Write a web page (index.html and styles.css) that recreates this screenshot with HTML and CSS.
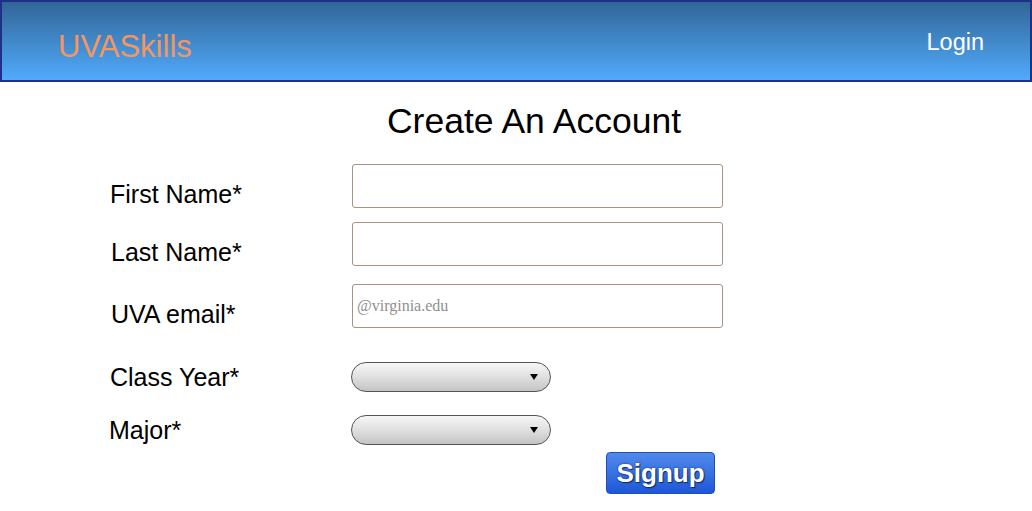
FILE: index.html
```html
<!DOCTYPE html>
<html lang="en">
<head>
<meta charset="utf-8">
<title>UVASkills - Create An Account</title>
<link rel="stylesheet" href="styles.css">
</head>
<body>
<header class="topbar">
  <a class="logo" href="#">UVASkills</a>
  <a class="login" href="#">Login</a>
</header>
<main class="page">
  <h1 class="title">Create An Account</h1>
  <form class="form">
    <div class="row row-first">
      <label class="label label-text" for="fn">First Name*</label>
      <input class="field" id="fn" type="text">
    </div>
    <div class="row row-last">
      <label class="label label-text" for="ln">Last Name*</label>
      <input class="field" id="ln" type="text">
    </div>
    <div class="row row-email">
      <label class="label label-text" for="em">UVA email*</label>
      <input class="field" id="em" type="text" placeholder="@virginia.edu">
    </div>
    <div class="row row-year">
      <label class="label" for="cy">Class Year*</label>
      <div class="select-wrap"><select class="select" id="cy"><option></option></select></div>
    </div>
    <div class="row row-major">
      <label class="label" for="mj">Major*</label>
      <div class="select-wrap"><select class="select" id="mj"><option></option></select></div>
    </div>
    <div class="row row-submit">
      <span></span>
      <button class="signup" type="button">Signup</button>
    </div>
  </form>
</main>
</body>
</html>
```
FILE: styles.css
```css
* { box-sizing: border-box; }
html, body { margin: 0; padding: 0; background: #fff; }
body { font-family: "Liberation Sans", Arial, sans-serif; color: #000; }

.topbar {
  height: 82px;
  border: 2px solid #1f3187;
  background: linear-gradient(to bottom, #326596 0%, #4a9de8 80%, #52a9fb 100%);
  display: flex;
  align-items: center;
  justify-content: space-between;
  padding: 0 46px 0 56px;
}
.logo {
  color: #f5955f;
  font-size: 31px;
  text-decoration: none;
  margin-top: 12px;
}
.login {
  color: #fff;
  font-size: 23.5px;
  text-decoration: none;
  margin-top: 2px;
}

.title {
  margin: 19px 0 0 36px;
  font-size: 35.5px;
  line-height: 41px;
  font-weight: normal;
  text-align: center;
}

.form {
  margin-top: 22px;
  padding-left: 110px;
}
.row {
  display: grid;
  grid-template-columns: 242px 371px;
  align-items: center;
}
.row-last { margin-top: 14px; }
.row-email { margin-top: 18px; }
.row-year { margin-top: 34px; }
.row-major { margin-top: 23px; }
.row-submit { margin-top: 7px; }

.label {
  font-size: 25px;
  line-height: 28px;
}
.label-text { padding-top: 16px; }
.row-last .label, .row-email .label { padding-left: 1px; }
.row-major .label { margin-left: -1px; }

.field {
  width: 371px;
  height: 44px;
  border: 1px solid #a39582;
  border-radius: 3px;
  background: #fff;
  padding: 0 4px;
  font-family: "Liberation Serif", "Times New Roman", serif;
  font-size: 16px;
  outline: none;
}
.field::placeholder { color: #8f8f8f; }

.select-wrap {
  position: relative;
  width: 200px;
  height: 30px;
  margin-left: -1px;
}
.select {
  appearance: none;
  -webkit-appearance: none;
  width: 200px;
  height: 30px;
  border: 1px solid #545454;
  border-radius: 15px;
  background: linear-gradient(to bottom, #f6f6f6 0%, #e2e2e2 45%, #c4c4c4 100%);
  font-family: "Liberation Sans", Arial, sans-serif;
  font-size: 14px;
  display: block;
}
.select-wrap::after {
  content: "";
  position: absolute;
  right: 13px;
  top: 12px;
  border-left: 4.5px solid transparent;
  border-right: 4.5px solid transparent;
  border-top: 6px solid #000;
  pointer-events: none;
}

.signup {
  width: 109px;
  height: 42px;
  margin-left: 254px;
  border: 1px solid #1f4fb4;
  border-radius: 4px;
  background: linear-gradient(to bottom, #5189ea 0%, #3a74e2 45%, #1f56d8 100%);
  color: #fff;
  font-family: "Liberation Sans", Arial, sans-serif;
  font-weight: bold;
  font-size: 26px;
  padding: 0;
  text-shadow: 0 0 2px #0d2f7a, 1px 1px 1px rgba(0,0,0,0.6);
  justify-self: start;
}
```
